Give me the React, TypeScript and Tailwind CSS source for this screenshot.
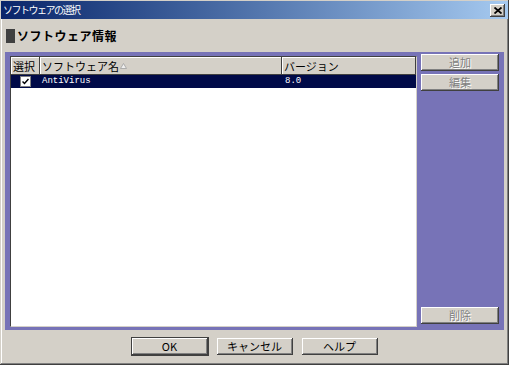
import React from "react";

const jp = "font-['MS_UI_Gothic','Noto_Sans_CJK_JP',sans-serif]";

const raised =
  "bg-[#d4d0c8] shadow-[inset_-1px_-1px_0_#404040,inset_1px_1px_0_#ffffff,inset_-2px_-2px_0_#808080]";

function SideButton({ label }: { label: string }) {
  return (
    <div
      className={`${raised} h-[17px] w-[78px] flex items-center justify-center text-[11px] text-[#808080] [text-shadow:1px_1px_0_#ffffff]`}
    >
      {label}
    </div>
  );
}

function DialogButton({ label, primary }: { label: string; primary?: boolean }) {
  return (
    <button
      className={`${raised} h-[17px] w-[76px] flex items-center justify-center text-[11px] text-black ${
        primary ? "outline outline-1 outline-[#404040]" : ""
      }`}
    >
      {label}
    </button>
  );
}

function HeaderCell({ children, className }: { children: React.ReactNode; className?: string }) {
  return (
    <div
      className={`h-[18px] flex items-center px-[2px] text-[11px] text-black bg-[#d4d0c8] shadow-[inset_-1px_-1px_0_#404040,inset_1px_1px_0_#ffffff] ${className ?? ""}`}
    >
      {children}
    </div>
  );
}

export default function App() {
  const rows = [{ name: "AntiVirus", version: "8.0", checked: true }];

  return (
    <div
      className={`${jp} w-[509px] h-[365px] bg-[#d4d0c8] flex flex-col shadow-[inset_-1px_-1px_0_#404040,inset_1px_1px_0_#d4d0c8,inset_-2px_-2px_0_#808080,inset_2px_2px_0_#ffffff] select-none`}
    >
      {/* title bar */}
      <div className="h-[18px] mt-[1px] mx-[1px] flex items-center justify-between bg-gradient-to-r from-[#0a246a] to-[#a6caf0] pl-[2px] pr-[3px]">
        <span className="text-white text-[10px] tracking-[-1.5px] leading-none">ソフトウェアの選択</span>
        <div className={`${raised} w-[15px] h-[13px] flex items-center justify-center`}>
          <svg width="8" height="7" viewBox="0 0 8 7">
            <path d="M0.5 0.5 L7.5 6.5 M7.5 0.5 L0.5 6.5" stroke="#000" strokeWidth="1.8" />
          </svg>
        </div>
      </div>

      {/* section header */}
      <div className="h-[33px] flex items-center pl-[6px] gap-[2px]">
        <div className="w-[9px] h-[14px] bg-[#404040]" />
        <span className="text-[12px] font-bold tracking-[0.5px] text-black">ソフトウェア情報</span>
      </div>

      {/* purple panel */}
      <div className="mx-[5px] h-[278px] bg-[#7773b7] flex gap-[4px] px-[5px]">
        <div className="mt-[4px] mb-[3px] w-[408px] bg-white border border-t-[#404040] border-l-[#404040] border-r-[#d4d0c8] border-b-[#d4d0c8] flex flex-col">
          <div className="flex">
            <HeaderCell className="w-[29px]">選択</HeaderCell>
            <HeaderCell className="w-[242px] gap-[1px]">
              ソフトウェア名
              <svg width="7" height="6" viewBox="0 0 7 6">
                <path d="M3.5 0.5 L6.5 5.5 L0.5 5.5 Z" fill="#f0f0f0" stroke="#a0a0a0" strokeWidth="0.8" />
              </svg>
            </HeaderCell>
            <HeaderCell className="flex-1">バージョン</HeaderCell>
          </div>
          {rows.map((r) => (
            <div key={r.name} className="h-[13px] flex items-center bg-[#000a48] text-white">
              <div className="w-[29px] flex justify-center">
                <div className="w-[11px] h-[11px] bg-white border border-[#808080] flex items-center justify-center">
                  <svg width="7" height="7" viewBox="0 0 7 7">
                    <path d="M0.5 3.5 L2.5 5.5 L6.5 1" stroke="#000" strokeWidth="1.5" fill="none" />
                  </svg>
                </div>
              </div>
              <div className="w-[242px] pl-[2px] text-[9px] font-['Liberation_Mono',monospace] leading-none">
                {r.name}
              </div>
              <div className="flex-1 pl-[3px] text-[9px] font-['Liberation_Mono',monospace] leading-none">
                {r.version}
              </div>
            </div>
          ))}
        </div>

        <div className="pt-[2px] pb-[6px] flex flex-col gap-[3px]">
          <SideButton label="追加" />
          <SideButton label="編集" />
          <div className="flex-1" />
          <SideButton label="削除" />
        </div>
      </div>

      {/* dialog buttons */}
      <div className="mt-[8px] flex justify-center gap-[9px] pl-[0px]">
        <DialogButton label="OK" primary />
        <DialogButton label="キャンセル" />
        <DialogButton label="ヘルプ" />
      </div>
    </div>
  );
}
